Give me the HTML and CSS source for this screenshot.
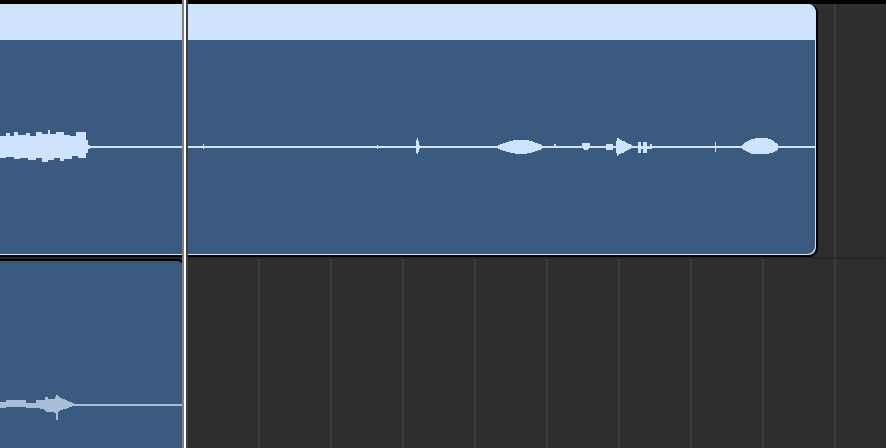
FILE: index.html
```html
<!DOCTYPE html>
<html lang="en">
<head>
  <meta charset="UTF-8">
  <title>Tracks</title>
  <link rel="stylesheet" href="styles.css">
</head>
<body>
  <div class="timeline">
    <div class="topbar"></div>

    <div class="track track-a">
      <div class="region region-main">
        <div class="region-header"></div>
        <div class="region-body">
          <svg class="wave" viewBox="-10 40 825 215" preserveAspectRatio="none" shape-rendering="crispEdges">
            <g fill="#cfe3fd">
              <rect x="-10" y="146" width="825" height="2"/>
              <!-- loud start -->
              <polygon points="-10,136 6,136 6,133 10,133 10,136 14,136 14,132 18,132 18,135 26,135 26,133 30,133 30,136 36,136 36,132 42,132 42,134 48,134 48,130 50,130 50,134 56,134 56,132 64,132 64,135 70,135 70,136 76,136 76,132 86,132 86,140 88,140 88,145 90,145 90,149 88,149 88,153 86,153 86,158 78,158 78,156 72,156 72,159 64,159 64,161 60,161 60,158 54,158 54,160 48,160 48,162 42,162 42,158 36,158 36,160 28,160 28,158 20,158 20,159 14,159 14,157 6,157 6,158 -10,158"/>
              <rect x="203" y="144" width="1" height="5"/>
              <rect x="377" y="145" width="1" height="4"/>
              <polygon points="416,143 417,138 418,138 419,143 420,146 420,148 419,151 418,154 417,154 416,151"/>
              <polygon points="498,145 504,143 510,141 516,140 526,140 532,141 536,143 542,145 542,149 536,151 530,153 524,154 518,154 512,153 504,151 498,149"/>
              <rect x="554" y="144" width="2" height="3"/>
              <polygon points="582,143 590,143 590,146 588,150 584,150 582,147"/>
              <polygon points="606,144 613,144 613,150 606,150"/>
              <polygon points="616,145 617,138 619,138 620,140 624,141 626,143 630,144 632,146 632,148 630,149 626,151 623,153 619,154 617,156 616,149"/>
              <polygon points="638,142 641,142 641,146 643,146 643,142 647,142 647,146 650,146 650,144 652,144 652,149 647,149 647,153 643,153 643,149 641,149 641,153 638,153"/>
              <rect x="715" y="142" width="1" height="10"/>
              <polygon points="742,145 746,142 752,139 758,138 766,138 772,140 776,143 778,145 778,149 776,151 772,153 766,154 758,154 752,154 746,151 742,149"/>
            </g>
          </svg>
        </div>
      </div>
    </div>

    <div class="track track-b">
      <div class="region region-small">
        <svg class="wave" viewBox="-10 261 193 190" preserveAspectRatio="none" shape-rendering="crispEdges">
          <g fill="#a9bdd6">
            <rect x="-10" y="404" width="193" height="2"/>
            <polygon points="-10,402 6,402 6,400 26,400 26,403 36,403 36,400 45,400 45,397 48,397 48,399 55,399 56,396 57,394 58,396 60,398 64,399 68,401 73,403 74,404 74,406 70,407 66,409 60,410 58,413 58,420 56,420 56,413 52,412 46,412 44,409 36,408 26,408 26,407 6,407 6,408 -10,408"/>
          </g>
        </svg>
      </div>
    </div>

    <div class="playhead"></div>
  </div>
</body>
</html>
```

FILE: styles.css
```css
* {
  box-sizing: border-box;
}

body {
  margin: 0;
  background-color: #2e2e2e;
  overflow: hidden;
  font-family: "Liberation Sans", Arial, sans-serif;
}

.timeline {
  position: relative;
  width: 886px;
  height: 448px;
  overflow: hidden;
  display: flex;
  flex-direction: column;
}

.topbar {
  height: 4px;
  background-color: #000;
  flex: none;
}

/* grid lines every 72px */
.track {
  background-color: #2e2e2e;
  background-image: repeating-linear-gradient(to right,
    transparent 0 42px,
    #3c3c3c 42px 44px,
    transparent 44px 72px);
}

.track-a {
  height: 255px;
  flex: none;
  border-bottom: 2px solid #262626;
}

.track-b {
  flex: 1;
}

.region {
  margin-left: -10px;
  overflow: hidden;
}

.region-main {
  width: 828px;
  height: 253px;
  display: flex;
  flex-direction: column;
  border-right: 2px solid #000;
  border-bottom: 2px solid #000;
  border-radius: 0 9px 9px 0;
  background-color: #3a5a80;
}

.region-header {
  height: 36px;
  background-color: #cfe3fd;
  flex: none;
}

.region-body {
  flex: 1;
  background-color: #3a5a80;
  box-shadow: inset -1px -1px 0 #cfe3fd;
  border-radius: 0 0 8px 0;
}

.region-small {
  width: 194px;
  height: 192px;
  border-top: 2px solid #000;
  border-right: 1px solid #000;
  border-radius: 0 7px 0 0;
  background-color: #3a5a80;
}

.wave {
  display: block;
  width: 100%;
  height: 100%;
}

.region-main .wave {
  width: 825px;
  height: 215px;
}

.region-small .wave {
  width: 193px;
  height: 190px;
}

/* playhead lies over the regions */
.playhead {
  position: absolute;
  top: 0;
  bottom: 0;
  left: 182px;
  width: 6px;
  background-color: #fff;
  border-left: 2px solid rgba(0, 0, 0, 0.5);
  border-right: 2px solid rgba(0, 0, 0, 0.75);
}
```
